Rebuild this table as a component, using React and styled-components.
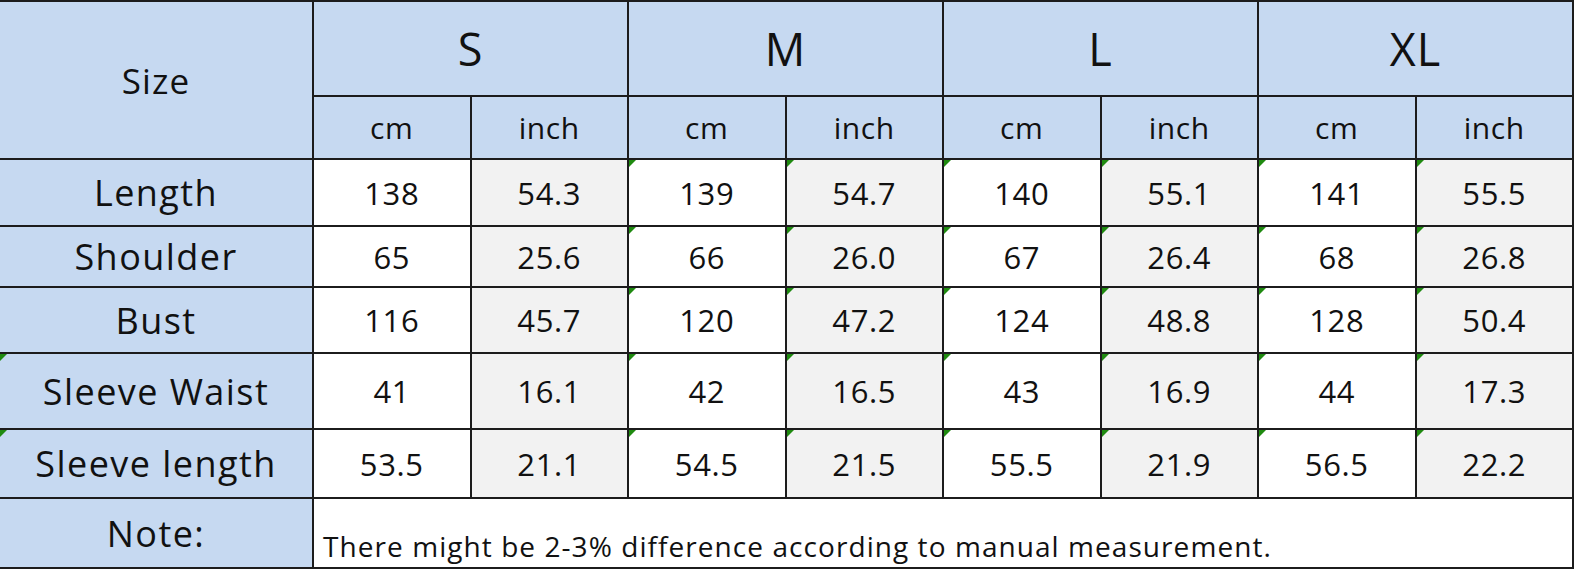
import React from 'react'
import styled, { createGlobalStyle, css } from 'styled-components'

const GlobalStyle = createGlobalStyle`
  html, body {
    margin: 0;
    padding: 0;
    background: #ffffff;
  }
  body {
    font-family: 'Open Sans', 'Noto Sans', 'Liberation Sans', sans-serif;
    color: #111;
  }
`

const Table = styled.div`
  width: 1574px;
  height: 569px;
  box-sizing: border-box;
  padding: 2px 2px 2px 0;
  display: grid;
  grid-template-columns: 312px repeat(8, 1fr);
  grid-template-rows: 93px 61px 65px 59px 64px 74px 67px 68px;
  gap: 2px;
  background: #1c1c1c;
`

const Cell = styled.div`
  position: relative;
  display: flex;
  align-items: center;
  justify-content: center;
  background: ${(p) => (p.$head ? '#c6d9f1' : p.$shade ? '#f2f2f2' : '#ffffff')};
  font-size: 31px;
  letter-spacing: 0.02em;
  ${(p) =>
    p.$flag &&
    css`
      &::before {
        content: '';
        position: absolute;
        left: 0;
        top: 0;
        border-top: 7px solid #1f8a10;
        border-right: 7px solid transparent;
      }
    `};
`

const SizeHead = styled(Cell)`
  grid-row: span 2;
  font-size: 35px;
  letter-spacing: 0.03em;
`

const GroupHead = styled(Cell)`
  grid-column: span 2;
  font-size: 45px;
  letter-spacing: 0.02em;
`

const Unit = styled(Cell)`
  font-size: 30px;
  letter-spacing: 0.02em;
`

const Label = styled(Cell)`
  font-size: 36px;
  letter-spacing: 0.04em;
`

const NoteText = styled(Cell)`
  grid-column: span 8;
  justify-content: flex-start;
  align-items: flex-end;
  padding: 0 0 2px 9px;
  font-size: 28px;
  letter-spacing: 0.038em;
`

const sizes = ['S', 'M', 'L', 'XL']

const rows = [
  { name: 'Length', values: ['138', '54.3', '139', '54.7', '140', '55.1', '141', '55.5'] },
  { name: 'Shoulder', values: ['65', '25.6', '66', '26.0', '67', '26.4', '68', '26.8'] },
  { name: 'Bust', values: ['116', '45.7', '120', '47.2', '124', '48.8', '128', '50.4'] },
  { name: 'Sleeve Waist', flag: true, values: ['41', '16.1', '42', '16.5', '43', '16.9', '44', '17.3'] },
  { name: 'Sleeve length', flag: true, values: ['53.5', '21.1', '54.5', '21.5', '55.5', '21.9', '56.5', '22.2'] },
]

const App = () => (
  <>
    <GlobalStyle />
    <Table>
      <SizeHead $head>Size</SizeHead>
      {sizes.map((s) => (
        <GroupHead $head key={s}>
          {s}
        </GroupHead>
      ))}
      {sizes.map((s) => (
        <React.Fragment key={s}>
          <Unit $head>cm</Unit>
          <Unit $head>inch</Unit>
        </React.Fragment>
      ))}
      {rows.map((r) => (
        <React.Fragment key={r.name}>
          <Label $head $flag={r.flag}>
            {r.name}
          </Label>
          {r.values.map((v, i) => (
            <Cell key={i} $shade={i % 2 === 1} $flag={i >= 2}>
              {v}
            </Cell>
          ))}
        </React.Fragment>
      ))}
      <Label $head>Note:</Label>
      <NoteText>There might be 2-3% difference according to manual measurement.</NoteText>
    </Table>
  </>
)

export default App
